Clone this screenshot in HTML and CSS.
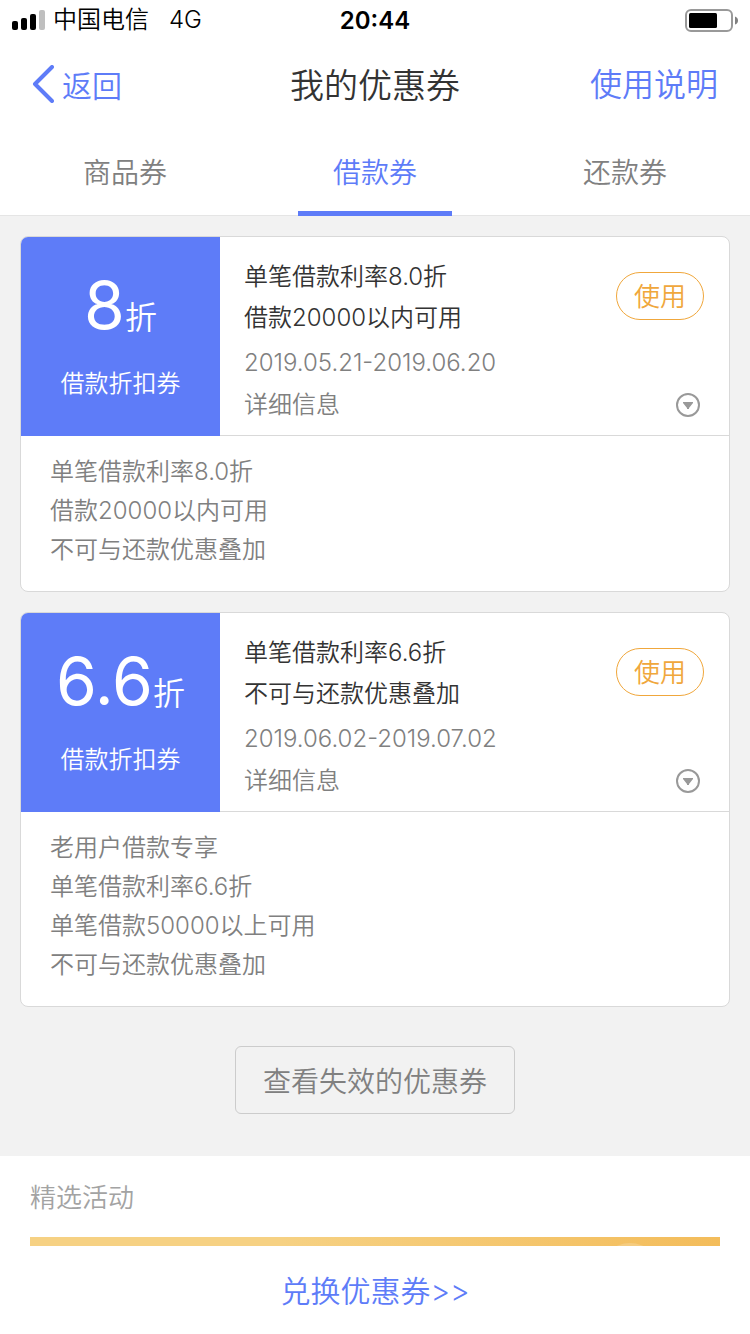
FILE: index.html
```html
<!DOCTYPE html>
<html lang="zh-CN">
<head>
<meta charset="utf-8">
<meta name="viewport" content="width=device-width, initial-scale=1">
<title>我的优惠券</title>
<link rel="stylesheet" href="styles.css">
</head>
<body>
<div class="app">
  <div class="status">
    <div class="carrier">
      <svg class="signal" viewBox="0 0 33 20" aria-hidden="true">
        <rect x="0" y="11" width="6" height="9" rx="2"/>
        <rect x="9" y="8" width="6" height="12" rx="2"/>
        <rect x="18" y="4" width="6" height="16" rx="2"/>
        <rect class="weak" x="27" y="0" width="6" height="20" rx="2"/>
      </svg>
      <span>中国电信</span>
      <span class="network">4G</span>
    </div>
    <time class="clock">20:44</time>
    <svg class="battery" viewBox="0 0 53 23" aria-hidden="true">
      <rect class="shell" x="1" y="1" width="46" height="21" rx="5"/>
      <rect x="4" y="4" width="28" height="15" rx="1.5"/>
      <path class="tip" d="M50 7.500q3 1 3 4t-3 4z"/>
    </svg>
  </div>

  <header class="nav">
    <button class="back" type="button">
      <svg class="chevron" viewBox="0 0 22 38" aria-hidden="true"><path d="M20 2 3 19 20 36"/></svg>
      <span>返回</span>
    </button>
    <h1 class="title">我的优惠券</h1>
    <a class="help" href="#">使用说明</a>
  </header>

  <nav class="tabs">
    <a class="tab" href="#">商品券</a>
    <a class="tab active" href="#" aria-current="page">借款券</a>
    <a class="tab" href="#">还款券</a>
  </nav>

  <main class="content">
    <div class="coupons">
      <article class="coupon">
        <div class="summary">
          <div class="value">
            <p class="amount"><span class="number">8</span>折</p>
            <p class="kind">借款折扣券</p>
          </div>
          <div class="info">
            <div class="row top">
              <h2 class="terms">单笔借款利率8.0折<br>借款20000以内可用</h2>
              <button class="use" type="button">使用</button>
            </div>
            <p class="dates">2019.05.21-2019.06.20</p>
            <button class="row toggle" type="button" aria-expanded="true">
              <span>详细信息</span>
              <svg class="arrow" viewBox="0 0 24 24" aria-hidden="true"><circle cx="12" cy="12" r="11"/><path d="M7 9h10v1l-4 5v1h-2v-1l-4-5z"/></svg>
            </button>
          </div>
        </div>
        <div class="details">
          <p>单笔借款利率8.0折</p>
          <p>借款20000以内可用</p>
          <p>不可与还款优惠叠加</p>
        </div>
      </article>

      <article class="coupon">
        <div class="summary">
          <div class="value">
            <p class="amount"><span class="number">6.6</span>折</p>
            <p class="kind">借款折扣券</p>
          </div>
          <div class="info">
            <div class="row top">
              <h2 class="terms">单笔借款利率6.6折<br>不可与还款优惠叠加</h2>
              <button class="use" type="button">使用</button>
            </div>
            <p class="dates">2019.06.02-2019.07.02</p>
            <button class="row toggle" type="button" aria-expanded="true">
              <span>详细信息</span>
              <svg class="arrow" viewBox="0 0 24 24" aria-hidden="true"><circle cx="12" cy="12" r="11"/><path d="M7 9h10v1l-4 5v1h-2v-1l-4-5z"/></svg>
            </button>
          </div>
        </div>
        <div class="details">
          <p>老用户借款专享</p>
          <p>单笔借款利率6.6折</p>
          <p>单笔借款50000以上可用</p>
          <p>不可与还款优惠叠加</p>
        </div>
      </article>
    </div>

    <button class="expired" type="button">查看失效的优惠券</button>

    <section class="events">
      <h2 class="events-title">精选活动</h2>
      <div class="banner">
        <svg class="coin" viewBox="0 0 60 60" aria-hidden="true"><circle cx="30" cy="30" r="30"/></svg>
      </div>
    </section>
  </main>

  <footer class="footer">
    <a class="redeem" href="#">兑换优惠券&gt;&gt;</a>
  </footer>
</div>
</body>
</html>
```
FILE: styles.css
```css
:root {
  --blue: #5e7cf8;
  --orange: #f0a73c;
  --gray: #808080;
  --line: #d9d9d9;
}

* {
  box-sizing: border-box;
}

body,
h1,
h2,
p {
  margin: 0;
}

body {
  font-family: Inter, "Noto Sans CJK SC", sans-serif;
  font-size: 24px;
  font-weight: 350;
  color: #333;
  background: #fff;
}

h1,
h2 {
  font-weight: inherit;
}

a {
  color: inherit;
  text-decoration: none;
}

button {
  padding: 0;
  border: 0;
  background: none;
  color: inherit;
  font: inherit;
  cursor: pointer;
}

svg {
  display: block;
  flex: none;
}

.app {
  display: flex;
  flex-direction: column;
  height: 100vh;
}

.status {
  display: grid;
  grid-template-columns: 1fr auto 1fr;
  align-items: center;
  height: 40px;
  padding: 0 12px;
  color: #000;
  flex: none;
}

.carrier {
  display: flex;
  align-items: center;
  gap: 8px;
  line-height: 40px;
}

.signal {
  width: 33px;
  height: 20px;
}

.signal .weak {
  fill: #bfbfbf;
}

.network {
  margin-left: 12px;
}

.clock {
  font-weight: 600;
}

.battery {
  width: 53px;
  height: 23px;
  justify-self: end;
}

.battery .shell {
  fill: none;
  stroke: #999;
  stroke-width: 2;
}

.battery .tip {
  fill: #808080;
}

.nav {
  display: grid;
  grid-template-columns: 1fr auto 1fr;
  align-items: center;
  height: 88px;
  padding: 0 32px;
  flex: none;
}

.back {
  display: flex;
  align-items: center;
  gap: 8px;
  justify-self: start;
  color: var(--blue);
  font-size: 30px;
}

.chevron {
  width: 22px;
  height: 38px;
  fill: none;
  stroke: currentColor;
  stroke-width: 4;
  stroke-linecap: round;
  stroke-linejoin: round;
}

.title {
  padding-bottom: 2px;
  font-size: 34px;
}

.help {
  justify-self: end;
  padding-bottom: 4px;
  color: var(--blue);
  font-size: 32px;
}

.tabs {
  display: flex;
  height: 88px;
  border-bottom: 1px solid #e5e5e5;
  color: var(--gray);
  font-size: 28px;
  flex: none;
}

.tab {
  display: flex;
  flex: 1;
  flex-direction: column;
  align-items: center;
  line-height: 90px;
}

.tab.active {
  color: var(--blue);
}

.tab.active::after {
  content: "";
  flex: none;
  width: 154px;
  height: 5px;
  margin-top: -7px;
  background: var(--blue);
}

.content {
  display: flex;
  flex: 1;
  flex-direction: column;
  align-items: center;
  min-height: 0;
  overflow: hidden;
  background: #f2f2f2;
}

.coupons {
  display: flex;
  flex-direction: column;
  gap: 20px;
  width: 100%;
  padding: 20px;
}

.coupon {
  overflow: hidden;
  border: 1px solid var(--line);
  border-radius: 8px;
  background: #fff;
}

.summary {
  display: flex;
  height: 199px;
}

.value {
  display: flex;
  flex: none;
  flex-direction: column;
  align-items: center;
  width: 199px;
  padding-top: 28px;
  background: var(--blue);
  color: #fff;
}

.amount {
  font-size: 32px;
  line-height: 80px;
}

.number {
  font-size: 66px;
  font-weight: 400;
}

.kind {
  margin-top: 8px;
  line-height: 36px;
}

.info {
  display: flex;
  flex: 1;
  flex-direction: column;
  padding: 19px 25px 0 24px;
  border-bottom: 1px solid var(--line);
}

.row {
  display: flex;
  justify-content: space-between;
}

.terms {
  font-size: 24px;
  line-height: 41px;
}

.use {
  width: 88px;
  height: 48px;
  margin-top: 16px;
  padding-bottom: 4px;
  border: 1px solid var(--orange);
  border-radius: 24px;
  color: var(--orange);
  font-size: 26px;
}

.dates {
  margin-top: 4px;
  color: var(--gray);
  line-height: 42px;
}

.toggle {
  align-items: center;
  padding-right: 4px;
  color: var(--gray);
  line-height: 42px;
}

.arrow {
  width: 24px;
  height: 24px;
}

.arrow circle {
  fill: none;
  stroke: #999;
  stroke-width: 2;
}

.arrow path {
  fill: #999;
}

.details {
  padding: 16px 30px 22px 29px;
  color: var(--gray);
  line-height: 39px;
}

.expired {
  flex: none;
  width: 280px;
  height: 68px;
  margin: 19px 0 42px;
  border: 1px solid #ccc;
  border-radius: 6px;
  color: var(--gray);
  font-size: 28px;
}

.events {
  flex: none;
  width: 100%;
  padding: 22px 30px 0;
  background: #fff;
}

.events-title {
  color: #a3a3a3;
  font-size: 26px;
  line-height: 40px;
}

.banner {
  display: flex;
  justify-content: flex-end;
  height: 160px;
  margin-top: 19px;
  padding: 6px 60px 0;
  background: linear-gradient(100deg, #f6d183 35%, #f3bb58);
}

.coin {
  width: 60px;
  height: 60px;
  fill: #f5cc80;
}

.footer {
  display: flex;
  flex: none;
  align-items: center;
  justify-content: center;
  height: 88px;
  padding-bottom: 2px;
  background: #fff;
  color: var(--blue);
  font-size: 30px;
}
```
